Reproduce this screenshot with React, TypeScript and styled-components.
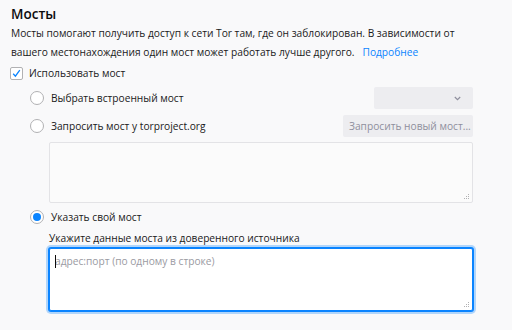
import styled, { createGlobalStyle } from 'styled-components';

const GlobalStyle = createGlobalStyle`
  html, body {
    margin: 0;
    padding: 0;
    background: #f9f9fa;
  }
  body {
    font-family: 'Open Sans', 'Noto Sans', sans-serif;
    color: #0c0c0d;
  }
`;

const Root = styled.div`
  width: 462px;
  padding: 4px 39px 16px 11px;
  display: flex;
  flex-direction: column;
`;

const Title = styled.h2`
  margin: 0;
  font-size: 13.5px;
  line-height: 20px;
  font-weight: 600;
  color: #0c0c0d;
`;

const Description = styled.p`
  margin: 0;
  font-size: 10.2px;
  line-height: 19px;
  color: #1a1a1b;
  white-space: nowrap;
`;

const LearnMore = styled.a`
  color: #0a84ff;
  text-decoration: none;
  margin-left: 8px;
`;

const Row = styled.label<{ $gap?: number }>`
  display: flex;
  align-items: center;
  height: 22px;
  margin-top: ${(p) => p.$gap ?? 0}px;
  font-size: 10.2px;
  color: #1a1a1b;
  white-space: nowrap;
`;

const Box = styled.span`
  position: relative;
  width: 11px;
  height: 11px;
  border: 1px solid #b1b1b3;
  border-radius: 2px;
  background: #fff;
  margin: 0 6px 0 -1px;
  flex-shrink: 0;
`;

const Options = styled.div`
  display: flex;
  flex-direction: column;
  padding-left: 19px;
`;

const Radio = styled.span<{ $checked?: boolean }>`
  width: 12px;
  height: 12px;
  border: 1px solid #b1b1b3;
  border-radius: 50%;
  background: #fff;
  margin-right: 7px;
  flex-shrink: 0;
  display: flex;
  align-items: center;
  justify-content: center;
  &::after {
    content: '';
    display: ${(p) => (p.$checked ? 'block' : 'none')};
    width: 8px;
    height: 8px;
    border-radius: 50%;
    background: #0a84ff;
  }
`;

const Spacer = styled.span`
  flex: 1;
`;

const Select = styled.div`
  width: 99px;
  height: 22px;
  background: #ededf0;
  border-radius: 2px;
  display: flex;
  align-items: center;
  justify-content: flex-end;
  padding-right: 12px;
  box-sizing: border-box;
`;

const GrayButton = styled.button`
  height: 22px;
  width: 130px;
  border: none;
  border-radius: 2px;
  background: #ededf0;
  color: #8f8f9d;
  font-family: inherit;
  font-size: 10.2px;
  padding: 0 6px;
  white-space: nowrap;
`;

const Indented = styled.div`
  padding-left: 19px;
  display: flex;
  flex-direction: column;
`;

const AreaWrap = styled.div<{ $gap?: number }>`
  position: relative;
  margin-top: ${(p) => p.$gap ?? 0}px;
`;

const Area = styled.textarea<{ $focused?: boolean; $height: number }>`
  display: block;
  width: 100%;
  height: ${(p) => p.$height}px;
  box-sizing: border-box;
  resize: none;
  font-family: inherit;
  font-size: 10.2px;
  padding: 5px 5px;
  border-radius: 2px;
  outline: none;
  border: 1px solid ${(p) => (p.$focused ? '#0a84ff' : '#e3e3e6')};
  background: ${(p) => (p.$focused ? '#fff' : '#fbfbfb')};
  box-shadow: ${(p) =>
    p.$focused ? '0 0 0 1px #0a84ff, 0 0 0 3px rgba(10,132,255,0.3)' : 'none'};
  &::placeholder {
    color: #9a9aa2;
  }
`;

const Caret = styled.span`
  position: absolute;
  left: 6px;
  top: 7px;
  width: 1px;
  height: 13px;
  background: #0c0c0d;
`;

const Grip = styled.svg`
  position: absolute;
  right: 3px;
  bottom: 3px;
`;

const FieldLabel = styled.div`
  font-size: 10.2px;
  line-height: 19px;
  margin-top: 1px;
  color: #1a1a1b;
`;

const ResizeGrip = () => (
  <Grip width="6" height="6" viewBox="0 0 6 6">
    <g fill="#b1b1b3">
      <rect x="4" y="0" width="1" height="1" />
      <rect x="2" y="2" width="1" height="1" />
      <rect x="4" y="2" width="1" height="1" />
      <rect x="0" y="4" width="1" height="1" />
      <rect x="2" y="4" width="1" height="1" />
      <rect x="4" y="4" width="1" height="1" />
    </g>
  </Grip>
);

export default function App() {
  return (
    <>
      <GlobalStyle />
      <Root>
        <Title>Мосты</Title>
        <Description>
          Мосты помогают получить доступ к сети Tor там, где он заблокирован. В зависимости от
          <br />
          вашего местонахождения один мост может работать лучше другого.
          <LearnMore href="#">Подробнее</LearnMore>
        </Description>
        <Row>
          <Box>
            <svg width="11" height="11" viewBox="0 0 11 11" style={{ position: 'absolute', left: 0, top: 0 }}>
              <path d="M2.2 5.8 L4.4 8.2 L8.8 2.2" fill="none" stroke="#0a84ff" strokeWidth="1.3" />
            </svg>
          </Box>
          Использовать мост
        </Row>
        <Options>
          <Row $gap={3}>
            <Radio />
            Выбрать встроенный мост
            <Spacer />
            <Select>
              <svg width="7" height="5" viewBox="0 0 7 5">
                <path d="M0.8 1 L3.5 3.6 L6.2 1" fill="none" stroke="#8f8f9d" strokeWidth="1.2" />
              </svg>
            </Select>
          </Row>
          <Row $gap={6}>
            <Radio />
            Запросить мост у torproject.org
            <Spacer />
            <GrayButton>Запросить новый мост...</GrayButton>
          </Row>
          <Indented>
            <AreaWrap $gap={5}>
              <Area $height={61} readOnly />
              <ResizeGrip />
            </AreaWrap>
          </Indented>
          <Row $gap={3}>
            <Radio $checked />
            Указать свой мост
          </Row>
          <Indented>
            <FieldLabel>Укажите данные моста из доверенного источника</FieldLabel>
            <AreaWrap>
              <Area $focused $height={63} placeholder="адрес:порт (по одному в строке)" />
              <Caret />
              <ResizeGrip />
            </AreaWrap>
          </Indented>
        </Options>
      </Root>
    </>
  );
}
